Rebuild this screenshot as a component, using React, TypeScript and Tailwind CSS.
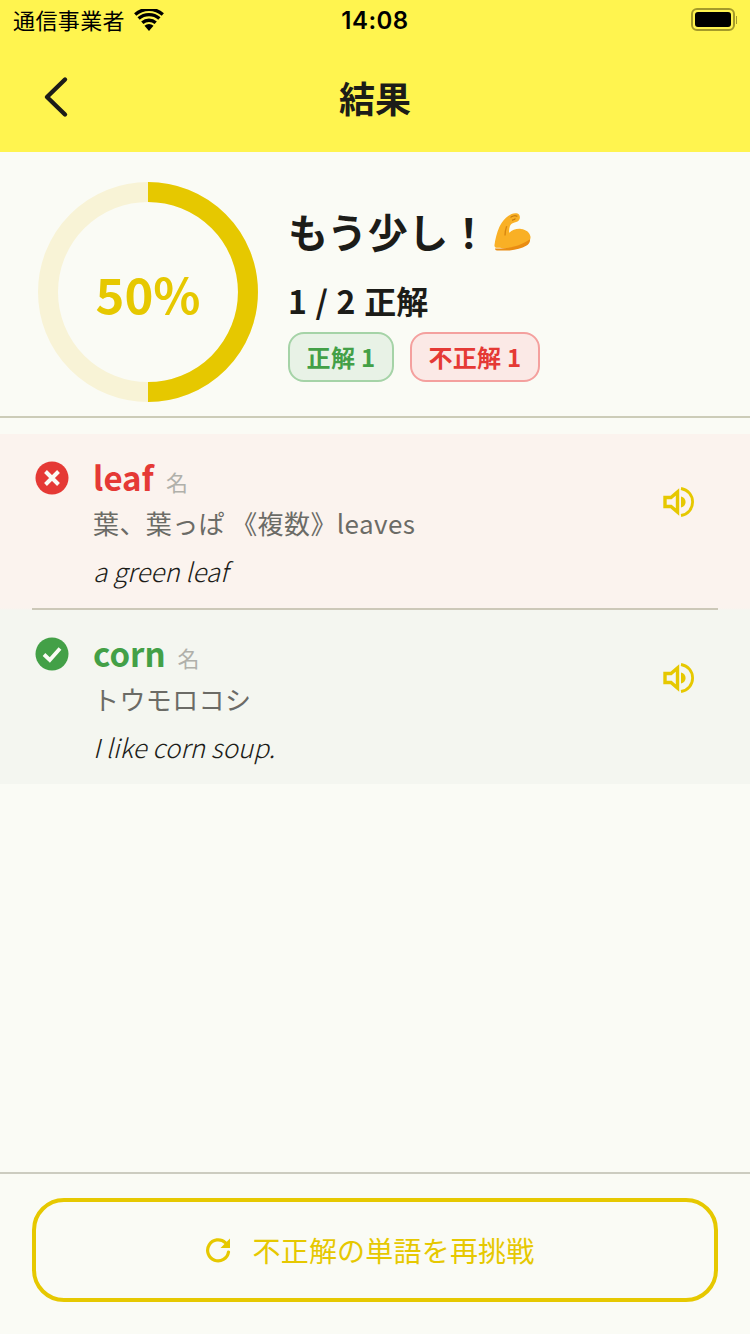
const JP = "font-['Noto_Sans_CJK_JP','Noto_Sans',sans-serif]";

function Speaker() {
  return (
    <svg width="32" height="32" viewBox="0 0 32 32" fill="none">
      <path d="M3 11.500h6L15.500 6v20L9 20.500H3z" stroke="#e6c800" strokeWidth="3.400" strokeLinejoin="miter" fill="none" />
      <path d="M19 10.500c3 .8 4.600 3 4.600 5.500s-1.600 4.700-4.600 5.500z" fill="#e6c800" />
      <path d="M19 2.500c7 1.200 11.600 6.800 11.600 13.500S26 28.300 19 29.500" stroke="#e6c800" strokeWidth="2.800" fill="none" />
    </svg>
  );
}

function WordRow({ ok, word, gloss, example, pos }: { ok: boolean; word: string; gloss: string; example: string; pos: string }) {
  return (
    <div className={`h-[174px] flex pl-[35px] pr-[56px] ${ok ? "bg-[#f4f6f0]" : "bg-[#fbf3ee]"}`}>
      <div className="w-[58px] shrink-0 pt-[27px]">
        <svg width="34" height="34" viewBox="0 0 34 34">
          <circle cx="17" cy="17" r="16.500" fill={ok ? "#43a047" : "#e53935"} />
          {ok ? (
            <path d="M9 17.500l5.800 5.500L25 11.500" stroke="#fafbf5" strokeWidth="3.800" fill="none" strokeLinecap="butt" strokeLinejoin="miter" />
          ) : (
            <path d="M10.500 10.500l13 13M23.500 10.500l-13 13" stroke="#fafbf5" strokeWidth="4" fill="none" strokeLinecap="butt" />
          )}
        </svg>
      </div>
      <div className="flex-1">
        <div className="flex items-baseline pt-[18px]">
          <span className={`text-[33px] leading-[50px] font-bold ${ok ? "text-[#43a047]" : "text-[#e53935]"}`}>{word}</span>
          <span className="text-[22px] leading-[50px] text-[#b0b0aa] ml-[12px]">{pos}</span>
        </div>
        <div className="text-[26px] leading-[40px] text-[#6b6b66] tracking-[0.4px] mt-[-3px]">{gloss}</div>
        <div className="text-[26px] leading-[40px] text-[#1c1c18] font-light italic mt-[8px]">{example}</div>
      </div>
      <div className="shrink-0 pt-[52px]">
        <Speaker />
      </div>
    </div>
  );
}

export default function App() {
  return (
    <div className={`${JP} w-[750px] h-[1334px] flex flex-col bg-[#fafbf5] text-[#1c1c18] overflow-hidden`}>
      <div className="h-[152px] bg-[#fff44f] shrink-0 flex flex-col">
        <div className="h-[42px] flex items-center relative pl-[13px] pr-[13px]">
          <span className="text-[22px] leading-[40px] text-black tracking-[0.4px] mb-[4px]">通信事業者</span>
          <svg className="ml-[9px] mb-[1px]" width="30" height="23" viewBox="0 0 30 23">
            <path d="M15 22l-4.500-5.200a6.500 6.500 0 0 1 9 0z" fill="#000" />
            <path d="M8.300 13.800a10.200 10.200 0 0 1 13.400 0" stroke="#000" strokeWidth="3.400" fill="none" />
            <path d="M4.600 9.500a15.800 15.800 0 0 1 20.800 0" stroke="#000" strokeWidth="3.400" fill="none" />
            <path d="M1.200 5.500a21 21 0 0 1 27.600 0" stroke="#000" strokeWidth="3.400" fill="none" />
          </svg>
          <span className="absolute left-0 right-0 text-center text-[24px] leading-[40px] font-semibold text-black tracking-[0.5px] font-['Inter',sans-serif]">14:08</span>
          <div className="ml-auto flex items-center mb-[3px]">
            <div className="w-[44px] h-[23px] rounded-[6px] border-[2px] border-[#a49a2a] p-[2px]">
              <div className="w-full h-full rounded-[3px] bg-black" />
            </div>
            <div className="w-[1px] h-[8px] bg-[#a49a2a] ml-[1px]" />
          </div>
        </div>
        <div className="flex-1 flex items-center relative pb-[1px]">
          <svg className="ml-[43px]" width="26" height="42" viewBox="0 0 26 42">
            <path d="M22 3.500L4 21l18 17.500" stroke="#1c1c18" strokeWidth="4.400" fill="none" strokeLinecap="round" strokeLinejoin="round" />
          </svg>
          <span className="absolute left-0 right-0 text-center text-[36px] leading-[50px] font-bold">結果</span>
        </div>
      </div>

      <div className="h-[266px] shrink-0 border-b-[2px] border-[#ccccb8] flex items-start pl-[38px] pt-[30px]">
        <div className="relative w-[220px] h-[220px] shrink-0">
          <svg width="220" height="220" viewBox="0 0 220 220">
            <circle cx="110" cy="110" r="100" fill="none" stroke="#f8f3d6" strokeWidth="20" />
            <path d="M110 10a100 100 0 0 1 0 200" fill="none" stroke="#e6c800" strokeWidth="20" />
          </svg>
          <div className="absolute inset-0 flex items-center justify-center text-[49px] font-bold text-[#e6c800] leading-none">50%</div>
        </div>
        <div className="ml-[30px] pt-[18px] flex flex-col items-start">
          <div className="flex items-center h-[62px]">
            <span className="text-[40px] leading-[62px] font-bold tracking-[0.5px]">もう少し！</span>
            <svg className="ml-[5px] mt-[2px]" width="37" height="40" viewBox="0 0 38 40">
              <path d="M18 1.500c3-1.200 6.500-1 7.800.8 1.300 1.800.9 4.400-.4 5.900-1.500 1.700-3.800 1.900-5.800 2.500-1.600.5-2.700 1.800-3.300 3.500-.7 2.200-1 4.600-.6 6.600 3-2.800 7.300-4.500 12-4 5.500.6 9.300 3.700 9.800 8.200.2 2.800-1.200 5-4 6.700-4.200 2.500-10.500 4.300-17 4.700-5 .3-11 .3-14-.2-1.500-.3-2.200-1.300-2-2.800.7-5.500 2.300-12.500 5-18.500 1.500-3.300 3.600-6.200 5.800-8.500 1.500-1.700 4.500-3.800 6.700-4.900z" fill="#f9b025" />
              <path d="M1 37c5.500.3 13-.3 19.500-2 5.500-1.400 11-3.500 16.500-7.500.3 2.800-1.200 5-4 6.700-4.200 2.500-10.500 4.300-17 4.700-5 .3-11 .3-14-.2-.6-.3-1-1-1-1.700z" fill="#e98c12" />
              <path d="M17 5c2-1.500 4.500-2 7-1.200M18.500 8c1.300-.3 2.600-.8 3.500-1.700" stroke="#b86e08" strokeWidth="1.100" fill="none" />
              <path d="M13 14c-1 3-1.700 6-1.700 9.500" stroke="#d8860f" strokeWidth="1.400" fill="none" />
            </svg>
          </div>
          <div className="text-[32px] leading-[46px] font-bold mt-[15px] tracking-[0.2px] [word-spacing:1px]">1 / 2 正解</div>
          <div className="flex gap-[16px] mt-[9px]">
            <div className="h-[50px] w-[106px] rounded-[16px] border-[2px] border-[#a5d3a7] bg-[#e8f2e6] flex items-center justify-center text-[24px] font-bold tracking-[0.3px] text-[#43a047]">正解 1</div>
            <div className="h-[50px] w-[130px] rounded-[16px] border-[2px] border-[#f4a09e] bg-[#fbe9e6] flex items-center justify-center text-[24px] font-bold tracking-[0.3px] text-[#e53935]">不正解 1</div>
          </div>
        </div>
      </div>

      <div className="flex-1 pt-[16px]">
        <WordRow ok={false} word="leaf" pos="名" gloss="葉、葉っぱ 《複数》leaves" example="a green leaf" />
        <div className="h-[2px] bg-[linear-gradient(#fbf3ee,#f4f6f0)] px-[32px]">
          <div className="h-full bg-[#ccc8b8]" />
        </div>
        <WordRow ok word="corn" pos="名" gloss="トウモロコシ" example="I like corn soup." />
      </div>

      <div className="h-[162px] shrink-0 border-t-[2px] border-[#ccccc0] px-[32px] pt-[24px]">
        <div className="h-[104px] rounded-[32px] border-[4px] border-[#e6c800] flex items-center justify-center gap-[19px] pr-[10px]">
          <svg width="28" height="28" viewBox="0 0 28 28">
            <path d="M23.500 16a10.500 10.500 0 1 1-3.200-9.300" stroke="#e6c800" strokeWidth="3.200" fill="none" strokeLinecap="round" />
            <path d="M25 2.500v9.500h-9.500z" fill="#e6c800" />
          </svg>
          <span className="text-[28px] leading-[40px] text-[#e6c800] tracking-[0.2px]">不正解の単語を再挑戦</span>
        </div>
      </div>
    </div>
  );
}
